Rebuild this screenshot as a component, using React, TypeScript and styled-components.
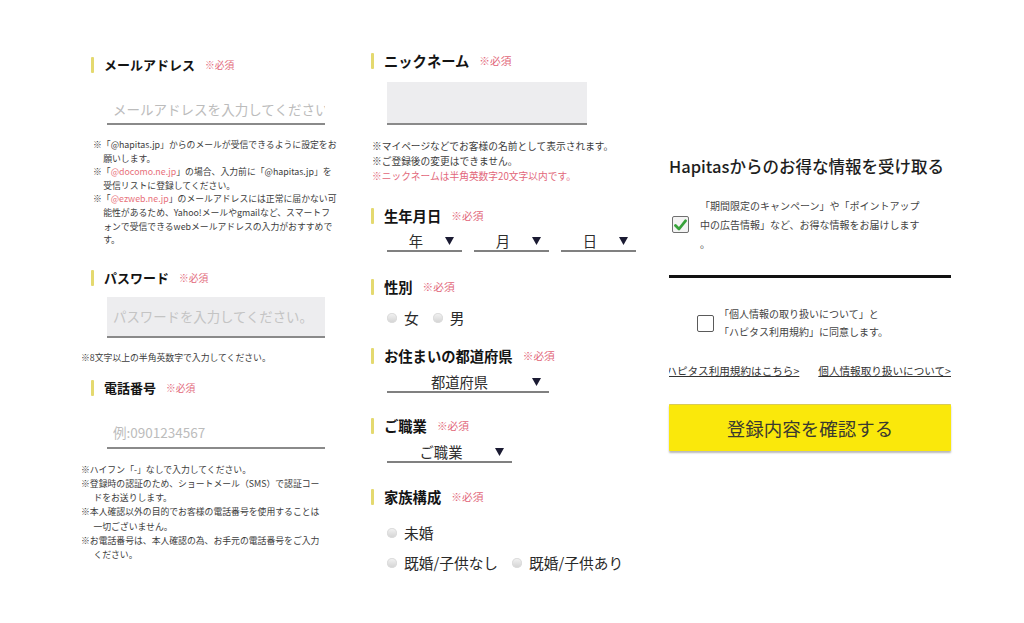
import React from 'react';
import styled, { createGlobalStyle } from 'styled-components';

const GlobalStyle = createGlobalStyle`
  html, body {
    margin: 0;
    padding: 0;
    background: #fff;
  }
  body {
    font-family: 'Noto Sans CJK JP', 'Noto Sans', sans-serif;
    color: #222;
  }
`;

const Section = ({ label }: { label: string }) => (
  <Heading>
    <Bar />
    <HeadingText>{label}</HeadingText>
    <Required>※必須</Required>
  </Heading>
);

const Arrow = () => (
  <ArrowIcon width="9" height="8" viewBox="0 0 9 8">
    <polygon points="0,0 9,0 4.5,8" fill="#1b1b33" />
  </ArrowIcon>
);

const Select = ({ label, w }: { label: string; w: number }) => (
  <SelectBox $w={w}>
    <SelectText>{label}</SelectText>
    <Arrow />
  </SelectBox>
);

const Radio = ({ label }: { label: string }) => (
  <RadioItem>
    <RadioDot />
    <RadioLabel>{label}</RadioLabel>
  </RadioItem>
);

const App = () => (
  <>
    <GlobalStyle />
    <Page>
      <Column $top={55} $base={13}>
        <Section label="メールアドレス" />
        <LineInput $mt={19} placeholder="メールアドレスを入力してください" readOnly />
        <Notes $mt={13} $ml={2} $lh={13.6} $indent={1.15}>
          <NoteItem>
            ※「@hapitas.jp」からのメールが受信できるように設定をお
            <br />
            願いします。
          </NoteItem>
          <NoteItem>
            ※「<Pink>@docomo.ne.jp</Pink>」の場合、入力前に「@hapitas.jp」を
            <br />
            受信リストに登録してください。
          </NoteItem>
          <NoteItem>
            ※「<Pink>@ezweb.ne.jp</Pink>」のメールアドレスには正常に届かない可
            <br />
            能性があるため、Yahoo!メールやgmailなど、スマートフ
            <br />
            ォンで受信できるwebメールアドレスの入力がおすすめで
            <br />
            す。
          </NoteItem>
        </Notes>

        <Spacer $h={21} />
        <Section label="パスワード" />
        <BoxInput $mt={9} $w={218} $h={39} placeholder="パスワードを入力してください。" readOnly />
        <Notes $mt={13} $ml={-10} $lh={14} $indent={1.4}>
          <NoteItem>※8文字以上の半角英数字で入力してください。</NoteItem>
        </Notes>

        <Spacer $h={13} />
        <Section label="電話番号" />
        <LineInput $mt={20} placeholder="例:0901234567" readOnly />
        <Notes $mt={14} $ml={-10} $lh={14.2} $indent={1.4}>
          <NoteItem>※ハイフン「-」なしで入力してください。</NoteItem>
          <NoteItem>
            ※登録時の認証のため、ショートメール（SMS）で認証コー
            <br />
            ドをお送りします。
          </NoteItem>
          <NoteItem>
            ※本人確認以外の目的でお客様の電話番号を使用することは
            <br />
            一切ございません。
          </NoteItem>
          <NoteItem>
            ※お電話番号は、本人確認の為、お手元の電話番号をご入力
            <br />
            ください。
          </NoteItem>
        </Notes>
      </Column>

      <Column $top={51} $base={14.3}>
        <Section label="ニックネーム" />
        <BoxInput $mt={11} $w={200} $h={41} readOnly />
        <Notes $mt={14} $ml={1} $lh={15} $indent={0}>
          <NoteItem>※マイページなどでお客様の名前として表示されます。</NoteItem>
          <NoteItem>※ご登録後の変更はできません。</NoteItem>
          <NoteItem $red>※ニックネームは半角英数字20文字以内です。</NoteItem>
        </Notes>

        <Spacer $h={22} />
        <Section label="生年月日" />
        <SelectRow $mt={6}>
          <Select label="年" w={75} />
          <Select label="月" w={75} />
          <Select label="日" w={75} />
        </SelectRow>

        <Spacer $h={25} />
        <Section label="性別" />
        <RadioRow $mt={11}>
          <Radio label="女" />
          <Radio label="男" />
        </RadioRow>

        <Spacer $h={18} />
        <Section label="お住まいの都道府県" />
        <SelectRow $mt={7}>
          <Select label="都道府県" w={162} />
        </SelectRow>

        <Spacer $h={23} />
        <Section label="ご職業" />
        <SelectRow $mt={7}>
          <Select label="ご職業" w={125} />
        </SelectRow>

        <Spacer $h={24} />
        <Section label="家族構成" />
        <RadioRow $mt={16}>
          <Radio label="未婚" />
        </RadioRow>
        <RadioRow $mt={10}>
          <Radio label="既婚/子供なし" />
          <Radio label="既婚/子供あり" />
        </RadioRow>
      </Column>

      <Column $top={154} $base={10}>
        <Title>Hapitasからのお得な情報を受け取る</Title>
        <CheckRow $mt={18} $pl={3} $gap={11} $lh={19}>
          <CheckBox>
            <svg width="13" height="12" viewBox="0 0 13 12">
              <path d="M1.5 6.5 L5 10 L11.5 1.8" fill="none" stroke="#37a23a" strokeWidth="2.8" strokeLinecap="round" strokeLinejoin="round" />
            </svg>
          </CheckBox>
          <CheckText>
            「期間限定のキャンペーン」や「ポイントアップ
            <br />
            中の広告情報」など、お得な情報をお届けします
            <br />
            。
          </CheckText>
        </CheckRow>
        <Rule />
        <CheckRow $mt={27} $pl={28} $gap={5} $lh={18}>
          <CheckBox $empty />
          <CheckText>
            「個人情報の取り扱いについて」と
            <br />
            「ハピタス利用規約」に同意します。
          </CheckText>
        </CheckRow>
        <LinkRow>
          <TextLink href="#terms">ハピタス利用規約はこちら&gt;</TextLink>
          <TextLink href="#privacy">個人情報取り扱いについて&gt;</TextLink>
        </LinkRow>
        <SubmitButton type="button">登録内容を確認する</SubmitButton>
      </Column>
    </Page>
  </>
);

export default App;

const Page = styled.div`
  width: 1024px;
  height: 623px;
  overflow: hidden;
  box-sizing: border-box;
  padding-left: 91px;
  display: grid;
  grid-template-columns: 250px 268px 282px;
  column-gap: 30px;
  align-items: start;
`;

const Column = styled.div<{ $top: number; $base: number }>`
  display: flex;
  flex-direction: column;
  padding-top: ${(p) => p.$top}px;
  font-size: ${(p) => p.$base}px;
  min-width: 0;
`;

const Spacer = styled.div<{ $h: number }>`
  height: ${(p) => p.$h}px;
  flex-shrink: 0;
`;

const Heading = styled.div`
  display: flex;
  align-items: center;
  height: 20px;
`;

const Bar = styled.span`
  width: 3px;
  height: 16px;
  background: #e4d96f;
  border-radius: 1px;
  flex-shrink: 0;
`;

const HeadingText = styled.span`
  margin-left: 10px;
  font-size: 1em;
  font-weight: 700;
  color: #141414;
  line-height: 20px;
  white-space: nowrap;
`;

const Required = styled.span`
  margin-left: 10px;
  font-size: 0.75em;
  color: #e2677a;
  line-height: 20px;
  white-space: nowrap;
`;

const LineInput = styled.input<{ $mt: number }>`
  display: block;
  margin: ${(p) => p.$mt}px 0 0 16px;
  width: 212px;
  height: 29px;
  box-sizing: content-box;
  padding: 0 0 0 6px;
  border: none;
  border-bottom: 2px solid #8a8a8a;
  background: transparent;
  font: inherit;
  font-size: 1.04em;
  color: #333;
  outline: none;
  &::placeholder {
    color: #bcbcbc;
  }
`;

const BoxInput = styled.input<{ $mt: number; $w: number; $h: number }>`
  display: block;
  margin: ${(p) => p.$mt}px 0 0 16px;
  width: ${(p) => p.$w - 6}px;
  height: ${(p) => p.$h}px;
  box-sizing: content-box;
  padding: 0 0 0 6px;
  border: none;
  border-bottom: 2px solid #8a8a8a;
  background: #ededef;
  font: inherit;
  font-size: 1.03em;
  color: #333;
  outline: none;
  &::placeholder {
    color: #c4c4c4;
  }
`;

const Notes = styled.div<{ $mt: number; $ml: number; $lh: number; $indent: number }>`
  margin: ${(p) => p.$mt}px 0 0 ${(p) => p.$ml}px;
  font-size: 0.68em;
  line-height: ${(p) => p.$lh}px;
  color: #3c3c3c;
  white-space: nowrap;
  & > div {
    padding-left: ${(p) => p.$indent}em;
    text-indent: -${(p) => p.$indent}em;
  }
`;

const NoteItem = styled.div<{ $red?: boolean }>`
  color: ${(p) => (p.$red ? '#e2677a' : 'inherit')};
`;

const Pink = styled.span`
  color: #e8707a;
`;

const SelectRow = styled.div<{ $mt: number }>`
  display: flex;
  gap: 12px;
  margin: ${(p) => p.$mt}px 0 0 16px;
`;

const SelectBox = styled.div<{ $w: number }>`
  display: flex;
  align-items: center;
  width: ${(p) => p.$w}px;
  height: 18px;
  border-bottom: 2px solid #808080;
`;

const SelectText = styled.span`
  flex: 1;
  text-align: center;
  font-size: 1em;
  line-height: 18px;
  color: #2e2e2e;
  white-space: nowrap;
`;

const ArrowIcon = styled.svg`
  margin-right: 8px;
  flex-shrink: 0;
`;

const RadioRow = styled.div<{ $mt: number }>`
  display: flex;
  gap: 14px;
  margin: ${(p) => p.$mt}px 0 0 16px;
  height: 20px;
  align-items: center;
`;

const RadioItem = styled.label`
  display: flex;
  align-items: center;
`;

const RadioDot = styled.span`
  width: 10px;
  height: 10px;
  border-radius: 50%;
  background: linear-gradient(#f4f4f4, #d2d2d2);
  box-shadow: inset 0 0 0 1px #dcdcdc;
  flex-shrink: 0;
`;

const RadioLabel = styled.span`
  margin-left: 7px;
  font-size: 1.03em;
  line-height: 20px;
  color: #2a2a2a;
  white-space: nowrap;
`;

const Title = styled.div`
  font-size: 16.5px;
  font-weight: 500;
  line-height: 24px;
  color: #1e1e1e;
  white-space: nowrap;
`;

const CheckRow = styled.div<{ $mt: number; $pl: number; $gap: number; $lh: number }>`
  display: flex;
  align-items: center;
  gap: ${(p) => p.$gap}px;
  margin-top: ${(p) => p.$mt}px;
  padding-left: ${(p) => p.$pl}px;
  line-height: ${(p) => p.$lh}px;
`;

const CheckBox = styled.span<{ $empty?: boolean }>`
  width: 17px;
  height: 17px;
  box-sizing: border-box;
  border: 1.5px solid ${(p) => (p.$empty ? '#5a5a5a' : '#707070')};
  border-radius: 2px;
  background: ${(p) => (p.$empty ? '#fff' : '#f4f4f4')};
  display: flex;
  align-items: center;
  justify-content: center;
  flex-shrink: 0;
`;

const CheckText = styled.div`
  font-size: 10px;
  color: #444;
  white-space: nowrap;
`;

const Rule = styled.div`
  margin-top: 22px;
  height: 3px;
  background: #121212;
`;

const LinkRow = styled.div`
  display: flex;
  justify-content: flex-end;
  gap: 19px;
  margin-top: 22px;
  overflow: hidden;
  line-height: 15px;
`;

const TextLink = styled.a`
  flex-shrink: 0;
  font-size: 10.6px;
  color: #333;
  text-decoration: underline;
  white-space: nowrap;
`;

const SubmitButton = styled.button`
  margin-top: 26px;
  width: 100%;
  height: 47px;
  border: none;
  border-top: 1px solid #d9cb56;
  border-radius: 1px;
  background: #fae80b;
  box-shadow: 0 2px 2px rgba(0, 0, 0, 0.28);
  font-family: 'Noto Sans CJK JP', sans-serif;
  font-size: 18.5px;
  color: #3a3a30;
  cursor: pointer;
`;
